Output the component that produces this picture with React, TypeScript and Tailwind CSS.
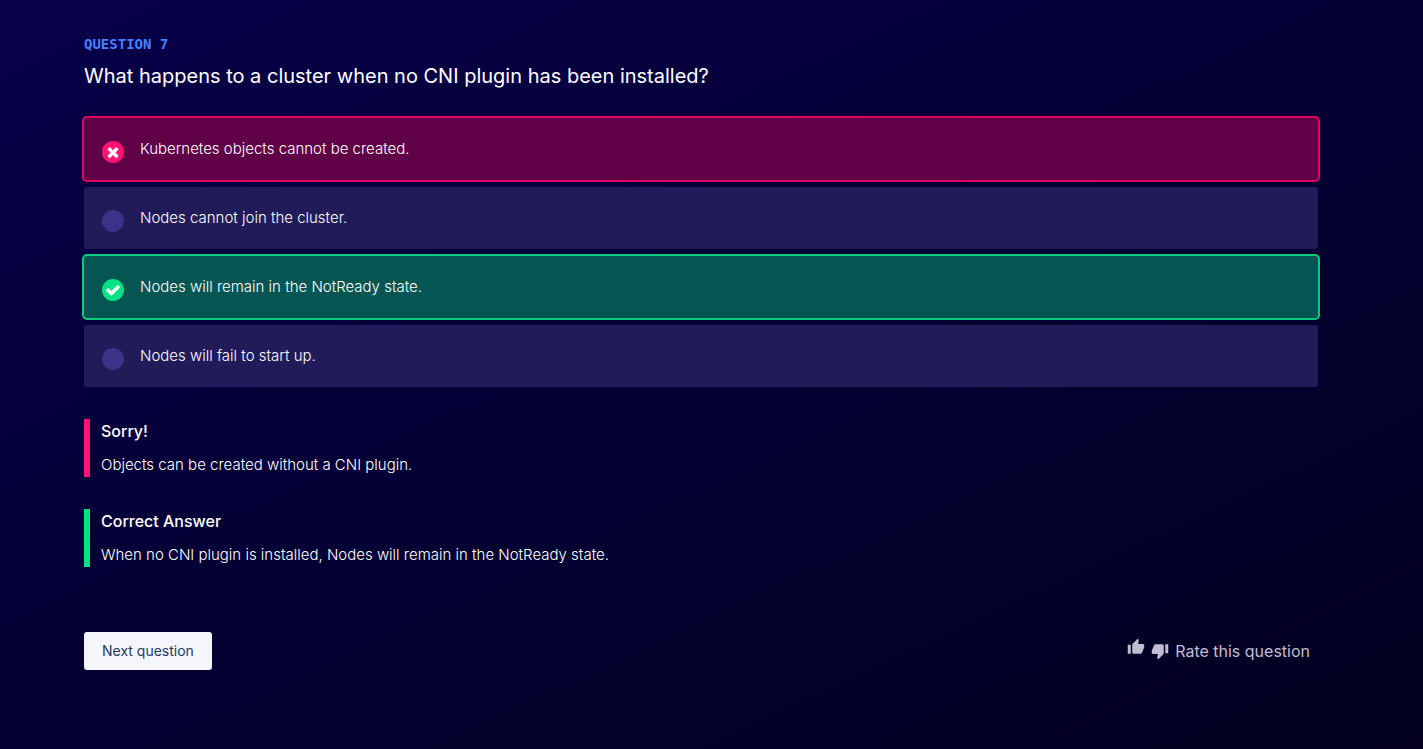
import { MdThumbDown, MdThumbUp } from "react-icons/md";

type Status = "idle" | "wrong" | "right";

const options: { text: string; status: Status }[] = [
  { text: "Kubernetes objects cannot be created.", status: "wrong" },
  { text: "Nodes cannot join the cluster.", status: "idle" },
  { text: "Nodes will remain in the NotReady state.", status: "right" },
  { text: "Nodes will fail to start up.", status: "idle" },
];

const rowStyles: Record<Status, string> = {
  idle: "bg-[#211b5a]",
  wrong: "bg-[#600046] ring-2 ring-[#df0660]",
  right: "bg-[#055553] ring-2 ring-[#03cc7c]",
};

const dotStyles: Record<Status, string> = {
  idle: "bg-[#3d3287]",
  wrong: "bg-[#ff1475]",
  right: "bg-[#05e286]",
};

const marks = {
  wrong:
    "M1490 1322q0 40-28 68l-136 136q-28 28-68 28t-68-28l-294-294-294 294q-28 28-68 28t-68-28l-136-136q-28-28-28-68t28-68l294-294-294-294q-28-28-28-68t28-68l136-136q28-28 68-28t68 28l294 294 294-294q28-28 68-28t68 28l136 136q28 28 28 68t-28 68l-294 294 294 294q28 28 28 68z",
  right:
    "M1671 566q0 40-28 68l-724 724-136 136q-28 28-68 28t-68-28l-136-136-362-362q-28-28-28-68t28-68l136-136q28-28 68-28t68 28l294 295 656-657q28-28 68-28t68 28l136 136q28 28 28 68z",
};

function Option({ id, text, status }: { id: string; text: string; status: Status }) {
  return (
    <label htmlFor={id} className={`flex rounded-[3px] px-[18px] pt-[19px] pb-[17px] ${rowStyles[status]}`}>
      <span className="mt-1 grid size-[22px] shrink-0 place-items-center">
        <input
          id={id}
          type="radio"
          name="answer"
          defaultChecked={status === "wrong"}
          className={`col-start-1 row-start-1 size-[22px] appearance-none rounded-full ${dotStyles[status]}`}
        />
        {status !== "idle" && (
          <svg
            viewBox="0 0 1792 1792"
            aria-hidden="true"
            className="pointer-events-none col-start-1 row-start-1 size-4 fill-white"
          >
            <path d={marks[status]} />
          </svg>
        )}
      </span>
      <span className="ml-4 text-[15px] leading-6 font-light">{text}</span>
    </label>
  );
}

function Note({ title, text, bar }: { title: string; text: string; bar: string }) {
  return (
    <section className={`border-l-6 pl-[11px] ${bar}`}>
      <h2 className="text-base leading-6 font-medium">{title}</h2>
      <p className="mt-[10px] text-[15px] leading-6 font-light">{text}</p>
    </section>
  );
}

export default function App() {
  return (
    <main className="min-h-screen bg-linear-155/srgb from-[#08004a] via-[#040034] to-[#02001e] pt-8 pr-[105px] pb-16 pl-[84px] font-['Inter',sans-serif] text-white">
      <p className="font-['DejaVu_Sans_Mono',monospace] text-sm leading-6 font-bold text-[#4680ff]">QUESTION 7</p>
      <h1 className="mt-1 text-xl leading-8">What happens to a cluster when no CNI plugin has been installed?</h1>
      <div role="radiogroup" aria-label="Answers" className="mt-[26px] flex flex-col gap-[7px]">
        {options.map((option, i) => (
          <Option key={option.text} id={`answer-${i}`} {...option} />
        ))}
      </div>
      <div className="mt-8 flex flex-col gap-8">
        <Note title="Sorry!" text="Objects can be created without a CNI plugin." bar="border-[#ff1475]" />
        <Note
          title="Correct Answer"
          text="When no CNI plugin is installed, Nodes will remain in the NotReady state."
          bar="border-[#05e286]"
        />
      </div>
      <footer className="mt-[65px] flex items-center justify-between">
        <button type="button" className="rounded-[3px] bg-[#f4f6fc] px-[18px] py-[9px] text-sm leading-5 text-[#263860]">
          Next question
        </button>
        <div className="mr-2 flex items-center text-[#c0bdd0]">
          <button type="button" aria-label="Good question" className="mb-2">
            <MdThumbUp className="size-[18px]" />
          </button>
          <button type="button" aria-label="Bad question" className="ml-[6px]">
            <MdThumbDown className="size-[18px]" />
          </button>
          <span className="ml-[6px] text-base leading-6">Rate this question</span>
        </div>
      </footer>
    </main>
  );
}
